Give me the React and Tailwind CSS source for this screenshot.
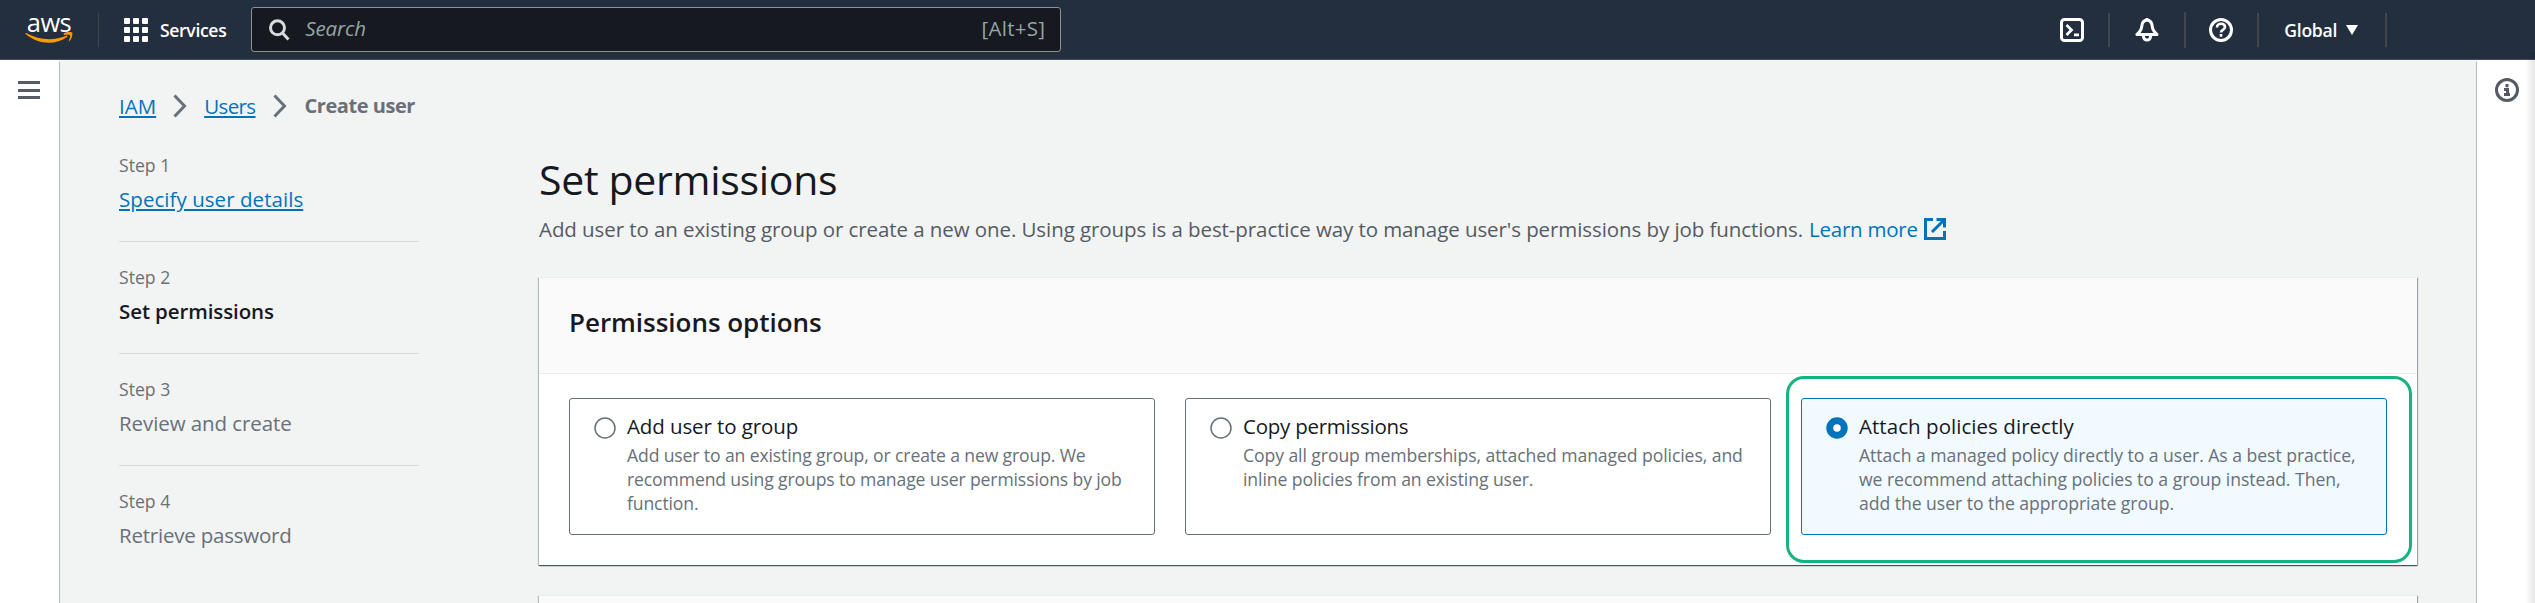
function Logo() {
  return (
    <div className="ml-[25px] flex h-[31px] w-[48px] flex-col items-center">
      <span className="-mt-[2px] h-[20px] text-[25.5px] leading-[20px] font-medium tracking-[-0.6px] text-white">aws</span>
      <svg className="h-[11px] w-[48px]" viewBox="0 0 48 11">
        <path d="M0.4 1.3C0.6.7 1.1.8 1.7 1.2 8.6 5 16.300 7.200 24.300 7.200 30 7.200 36 6 41.300 3.700c.9-.4 1.600.6.7 1.200C37 8.700 30.200 10.700 24 10.700 15.300 10.700 7.200 7.500 1 2.200.6 1.900.3 1.600.4 1.300z" fill="#ff9900" />
        <path d="M38.600 1.600C41.300-.3 46.600-.1 47.200.7c.7.8-.2 6.200-2.800 8.400-.4.3-.8.1-.6-.3.6-1.500 1.900-4.800 1.300-5.600-.6-.8-4.100-.4-5.700-.2-.5.1-1-.9-.8-1.400z" fill="#ff9900" />
      </svg>
    </div>
  );
}

function GridIcon() {
  return (
    <div className="grid grid-cols-3 gap-[3px]">
      {[0, 1, 2, 3, 4, 5, 6, 7, 8].map((n) => (
        <span key={n} className="size-[6px] rounded-[1px] bg-white" />
      ))}
    </div>
  );
}

const stroke = { fill: 'none', stroke: 'currentColor' };

function Chevron() {
  return (
    <svg className="mx-[17px] h-[24px] w-[14px] text-[#687078]" viewBox="0 0 14 24" {...stroke} strokeWidth="3">
      <path d="M1.500 1.500 11.500 12 1.500 22.500" />
    </svg>
  );
}

function TopBar() {
  return (
    <header className="flex h-[60px] items-center border-b border-[#414d5c] bg-[#232f3e] text-white">
      <Logo />
      <span className="ml-[25px] h-[34px] w-px bg-[#414750]" />
      <div className="ml-[25px] flex items-center gap-[12px]">
        <GridIcon />
        <span className="text-[17.6px] leading-6 font-semibold tracking-[-0.35px]">Services</span>
      </div>
      <div className="ml-[25px] flex h-[45px] w-[810px] items-center rounded-[3px] border border-[#879596] bg-[#16191f] pr-[15px] pl-[17px] text-[20.5px] text-[#95a5a6]">
        <svg className="h-[22px] w-[21px] text-[#d5dbdb]" viewBox="0 0 21 22" {...stroke} strokeWidth="3">
          <circle cx="8.500" cy="8.800" r="7" />
          <path d="m13.500 14 6 6.500" />
        </svg>
        <span className="-mt-[2px] ml-[15px] grow tracking-[-0.15px] italic">Search</span>
        <span className="-mt-[2px] tracking-[0.3px]">[Alt+S]</span>
      </div>
      <div className="ml-auto flex items-center">
        <svg className="size-6" viewBox="0 0 24 24" {...stroke} strokeWidth="3">
          <rect x="1.500" y="1.500" width="21" height="21" rx="3" />
          <path d="m6.500 7 5 5-5 5M14 16.800h5" strokeWidth="2.700" />
        </svg>
        <span className="ml-[24px] h-[34px] w-[2px] bg-[#414750]" />
        <svg className="ml-[25px] size-6" viewBox="0 0 24 24" {...stroke} strokeWidth="3">
          <path d="M12 2C8.500 2.500 7 5 6.800 8.200 6.500 12 5 14 2 16.500h20C19 14 17.500 12 17.200 8.200 17 5 15.500 2.500 12 2zM12 0v3" strokeLinejoin="round" />
          <path d="M8.500 17v1.600a3.500 3.500 0 0 0 7 0V17" />
        </svg>
        <span className="ml-[25px] h-[36px] w-[2px] bg-[#414750]" />
        <svg className="ml-[23px] size-6" viewBox="0 0 24 24" {...stroke} strokeWidth="3">
          <circle cx="12" cy="12" r="10.500" />
          <path d="M8 9.500C8 7 9.600 5.800 12 5.800s4 1.200 4 3.300c0 2.600-4 2.700-4 5.400M12 16v2.800" strokeWidth="2.600" />
        </svg>
        <span className="ml-[24px] h-[34px] w-[2px] bg-[#414750]" />
        <span className="ml-[25px] text-[17.6px] leading-6 font-semibold tracking-[-0.3px]">Global</span>
        <svg className="ml-[9px] h-[10px] w-[12px]" viewBox="0 0 12 10">
          <path d="M0 0h12L6 10z" fill="currentColor" />
        </svg>
        <span className="mr-[148px] ml-[27px] h-[34px] w-[2px] bg-[#414750]" />
      </div>
    </header>
  );
}

const steps = [
  { label: 'Step 1', title: 'Specify user details', style: 'text-[#0073bb] underline decoration-2 underline-offset-[2px] tracking-[0.05px]' },
  { label: 'Step 2', title: 'Set permissions', style: 'font-semibold text-[#16191f] tracking-[-0.1px]' },
  { label: 'Step 3', title: 'Review and create', style: 'text-[#687078] tracking-[-0.08px]' },
  { label: 'Step 4', title: 'Retrieve password', style: 'text-[#687078] tracking-[-0.22px]' },
];

function Steps() {
  return (
    <ol className="w-[300px] shrink-0 pt-[32px]">
      {steps.map((s, i) => (
        <li key={s.label} className={i ? 'border-t border-[#d5dbdb] pt-[23px] pb-[26px]' : 'pb-[26px]'}>
          <div className="text-[17.6px] leading-6 text-[#687078]">{s.label}</div>
          <div className="mt-[6px] text-[20.5px] leading-8"><span className={s.style}>{s.title}</span></div>
        </li>
      ))}
    </ol>
  );
}

const options = [
  {
    title: 'Add user to group',
    titleStyle: 'tracking-[-0.1px]',
    textStyle: 'tracking-[-0.13px]',
    lines: ['Add user to an existing group, or create a new group. We', 'recommend using groups to manage user permissions by job', 'function.'],
  },
  {
    title: 'Copy permissions',
    titleStyle: 'tracking-[-0.25px]',
    textStyle: 'tracking-[-0.08px]',
    lines: ['Copy all group memberships, attached managed policies, and', 'inline policies from an existing user.'],
  },
  {
    title: 'Attach policies directly',
    titleStyle: 'tracking-[0.05px]',
    textStyle: 'tracking-[-0.04px]',
    selected: true,
    lines: ['Attach a managed policy directly to a user. As a best practice,', 'we recommend attaching policies to a group instead. Then,', 'add the user to the appropriate group.'],
  },
];

function Radio({ selected }) {
  return (
    <svg className="mt-[6px] size-[22px] shrink-0" viewBox="0 0 22 22">
      {selected ? (
        <circle cx="11" cy="11" r="7.250" fill="#fff" stroke="#0073bb" strokeWidth="7" />
      ) : (
        <circle cx="11" cy="11" r="10" fill="#fff" stroke="#687078" strokeWidth="1.500" />
      )}
    </svg>
  );
}

function Option({ title, lines, selected, titleStyle, textStyle }) {
  return (
    <label className={`relative flex h-[137px] rounded-[3px] border pt-[12px] pl-[24px] ${selected ? 'border-[#0073bb] bg-[#f1faff]' : 'border-[#687078]'}`}>
      <Radio selected={selected} />
      <span className="ml-[11px] block whitespace-nowrap">
        <span className={`block text-[20.5px] leading-[30px] text-[#16191f] ${titleStyle}`}>{title}</span>
        <span className={`mt-[2px] block text-[17.6px] leading-6 text-[#687078] ${textStyle}`}>
          {lines.map((l) => (
            <span key={l} className="block">{l}</span>
          ))}
        </span>
      </span>
      {selected && <span className="absolute -top-[23px] -right-[26px] -bottom-[29px] -left-[16px] rounded-[18px] border-[3px] border-[#16b280]" />}
    </label>
  );
}

const card = 'border-t border-[#eaeded] shadow-[0_1px_1px_0_rgba(0,28,36,0.5),1px_1px_1px_0_rgba(0,28,36,0.3),-1px_1px_1px_0_rgba(0,28,36,0.2)]';

export default function App() {
  return (
    <div className="relative h-[603px] overflow-hidden bg-[#f2f3f3] font-['Open_Sans','Noto_Sans',sans-serif]">
      <TopBar />
      <div className="flex h-[543px]">
        <nav className="w-[59px] shrink-0 bg-white pt-[21px] pl-[18px] shadow-[1px_2px_1px_0_#b9c2c2]">
          <div className="flex w-[22px] flex-col gap-[4.500px]">
            <span className="h-[3px] bg-[#545b64]" />
            <span className="h-[3px] bg-[#545b64]" />
            <span className="h-[3px] bg-[#545b64]" />
          </div>
        </nav>
        <main className="grow pr-[60px] pl-[60px]">
          <div className="mt-[31px] flex h-[30px] items-center text-[20.5px] leading-[30px]">
            <a className="text-[#0073bb] underline decoration-2 underline-offset-[2px]">IAM</a>
            <Chevron />
            <a className="tracking-[-0.6px] text-[#0073bb] underline decoration-2 underline-offset-[2px]">Users</a>
            <Chevron />
            <span className="ml-[1px] text-[20px] font-bold tracking-[-0.45px] text-[#687078]">Create user</span>
          </div>
          <div className="flex gap-[120px]">
            <Steps />
            <section className="grow pt-[31px]">
              <h1 className="text-[41px] leading-[54px] tracking-[-0.3px] text-[#16191f]">Set permissions</h1>
              <p className="mt-[8px] flex items-center text-[20.5px] leading-[30px] tracking-[-0.08px] text-[#545b64]">
                <span>Add user to an existing group or create a new one. Using groups is a best-practice way to manage user's permissions by job functions.</span>
                <a className="ml-[6px] tracking-[-0.25px] text-[#0073bb]">Learn more</a>
                <svg className="ml-[6px] size-[22px] text-[#0073bb]" viewBox="0 0 22 22" {...stroke} strokeWidth="3">
                  <path d="M9 1.500H1.500v19h19V13M12.500 1.500h8V9.500M20 2 8 14" />
                </svg>
              </p>
              <div className={`mt-[33px] bg-white ${card}`}>
                <div className="h-[96px] border-b border-[#eaeded] bg-[#fafafa] pt-[28px] pl-[30px]">
                  <h2 className="text-[26px] leading-[33px] font-semibold tracking-[-0.03px] text-[#16191f]">Permissions options</h2>
                </div>
                <div className="grid grid-cols-3 gap-[30px] px-[30px] pt-[24px] pb-[30px]">
                  {options.map((o) => <Option key={o.title} {...o} />)}
                </div>
              </div>
              <div className={`mt-[30px] h-[60px] bg-[#fafafa] ${card}`} />
            </section>
          </div>
        </main>
        <aside className="w-[58px] shrink-0 bg-white pt-[18px] pl-[18px] shadow-[-1px_2px_1px_0_#b9c2c2]">
          <svg className="size-6 text-[#545b64]" viewBox="0 0 24 24" {...stroke} strokeWidth="3">
            <circle cx="12" cy="12" r="10.500" />
            <path d="M12 6v3.200M9 11.500h3.500V18M9 16.500h6" />
          </svg>
        </aside>
      </div>
      <div className="absolute top-[52px] right-0 bottom-0 w-[10px] bg-linear-to-r from-transparent to-black/10" />
    </div>
  );
}
